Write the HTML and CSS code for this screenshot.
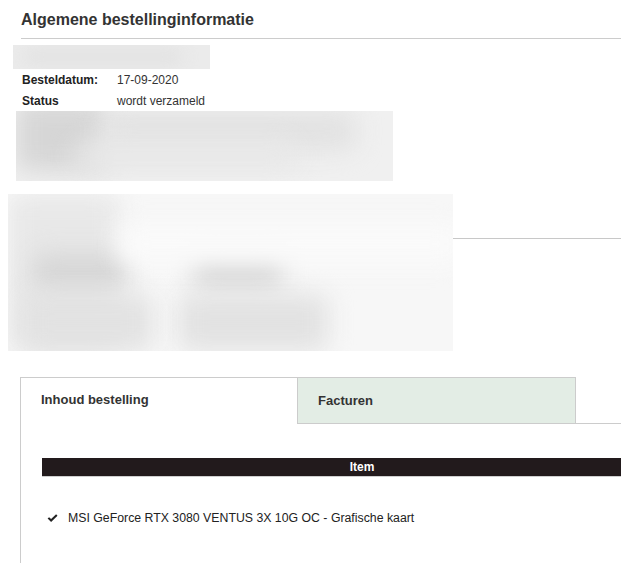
FILE: index.html
```html
<!DOCTYPE html>
<html lang="nl">
<head>
<meta charset="utf-8">
<title>Algemene bestellinginformatie</title>
<link rel="stylesheet" href="styles.css">
</head>
<body>
<div class="page">
  <h1 class="title">Algemene bestellinginformatie</h1>

  <div class="redact redact-top">
    <span class="blob" style="left:10px;top:4px;width:160px;height:16px"></span>
  </div>

  <div class="info">
    <div class="info-row"><span class="label">Besteldatum:</span><span class="value">17-09-2020</span></div>
    <div class="info-row"><span class="label">Status</span><span class="value">wordt verzameld</span></div>
  </div>

  <div class="redact redact-one">
    <span class="blob b-dark" style="left:0px;top:-10px;width:90px;height:70px"></span>
    <span class="blob" style="left:90px;top:0px;width:250px;height:40px"></span>
    <span class="blob b-light" style="left:60px;top:30px;width:220px;height:30px"></span>
  </div>

  <div class="section-row">
    <div class="redact redact-two">
      <span class="blob b-light" style="left:0px;top:0px;width:110px;height:157px"></span>
      <span class="blob b-dark" style="left:25px;top:60px;width:95px;height:35px"></span>
      <span class="blob b-dark" style="left:185px;top:60px;width:90px;height:35px"></span>
      <span class="blob" style="left:170px;top:100px;width:150px;height:57px"></span>
      <span class="blob b-faint" style="left:110px;top:30px;width:345px;height:40px"></span>
      <span class="blob" style="left:15px;top:100px;width:130px;height:57px"></span>
    </div>
    <div class="section-line"></div>
  </div>

  <div class="tabs-wrap">
    <div class="tabs">
      <div class="tab tab-active">Inhoud bestelling</div>
      <div class="tab tab-inactive">Facturen</div>
      <div class="tab-fill"></div>
    </div>
    <div class="panel">
      <div class="items">
        <div class="items-head">Item</div>
        <div class="item-row">
          <svg class="check" width="11" height="9" viewBox="0 0 11 9" aria-hidden="true">
            <path d="M0.6 4.6 L2.1 3.2 L4.1 5.1 L9.1 0.3 L10.5 1.7 L4.1 8 Z" fill="#222"/>
          </svg>
          <span class="item-name">MSI GeForce RTX 3080 VENTUS 3X 10G OC - Grafische kaart</span>
        </div>
      </div>
    </div>
  </div>
</div>
</body>
</html>
```

FILE: styles.css
```css
html, body {
  margin: 0;
  padding: 0;
  background: #ffffff;
  overflow: hidden;
}

body {
  font-family: "Liberation Sans", Arial, sans-serif;
  color: #333333;
}

.page {
  width: 621px;
  height: 563px;
  overflow: hidden;
}

.title {
  box-sizing: border-box;
  margin: 0 0 0 21px;
  padding: 10px 0 0 0;
  height: 39px;
  font-size: 16px;
  line-height: 19px;
  font-weight: bold;
  color: #333333;
  border-bottom: 1px solid #cccccc;
}

.redact {
  position: relative;
  overflow: hidden;
  background: #f6f6f6;
}

.blob {
  position: absolute;
  background: #e2e2e2;
  filter: blur(12px);
  border-radius: 10px;
}

.b-dark { background: #d6d6d6; }
.b-light { background: #e8e8e8; }
.b-faint { background: #fafafa; }

.redact-top {
  margin: 6px 0 0 13px;
  width: 197px;
  height: 24px;
  background: #ebebeb;
}

.redact-top .blob {
  background: #e2e2e2;
  filter: blur(8px);
}

.info {
  padding-left: 22px;
}

.info-row {
  display: flex;
  height: 21px;
  line-height: 22px;
  font-size: 12px;
}

.label {
  width: 95px;
  font-weight: bold;
  color: #222222;
}

.value {
  color: #333333;
}

.redact-one {
  margin-left: 16px;
  width: 377px;
  height: 70px;
  background: #f0f0f0;
}

.section-row {
  display: flex;
  align-items: flex-start;
  margin-top: 13px;
}

.redact-two {
  margin-left: 8px;
  width: 445px;
  height: 157px;
  flex: none;
  background: #f7f7f7;
}

.section-line {
  flex: 1;
  margin-top: 44px;
  height: 1px;
  background: #c8c8c8;
}

.tabs-wrap {
  margin: 26px 0 0 20px;
}

.tabs {
  display: flex;
  height: 47px;
}

.tab {
  box-sizing: border-box;
  height: 47px;
  font-size: 13px;
  font-weight: bold;
  color: #333333;
}

.tab-active {
  width: 277px;
  border-top: 1px solid #cccccc;
  border-left: 1px solid #cccccc;
  padding: 14px 0 0 20px;
}

.tab-inactive {
  width: 279px;
  border: 1px solid #cccccc;
  background: #e3ede5;
  padding: 15px 0 0 20px;
}

.tab-fill {
  flex: 1;
  border-bottom: 1px solid #cccccc;
}

.panel {
  border-left: 1px solid #cccccc;
  padding: 34px 0 0 21px;
  height: 105px;
}

.items-head {
  height: 18px;
  line-height: 18px;
  background: #221a1c;
  color: #ffffff;
  font-size: 12px;
  font-weight: bold;
  text-align: center;
  padding-left: 61px;
  border-bottom: 1px solid #cfcfcf;
}

.item-row {
  display: flex;
  align-items: center;
  margin-top: 33px;
  height: 16px;
  padding-left: 5px;
}

.check {
  flex: none;
  margin-right: 10px;
}

.item-name {
  font-size: 12.3px;
  color: #222222;
}
```
